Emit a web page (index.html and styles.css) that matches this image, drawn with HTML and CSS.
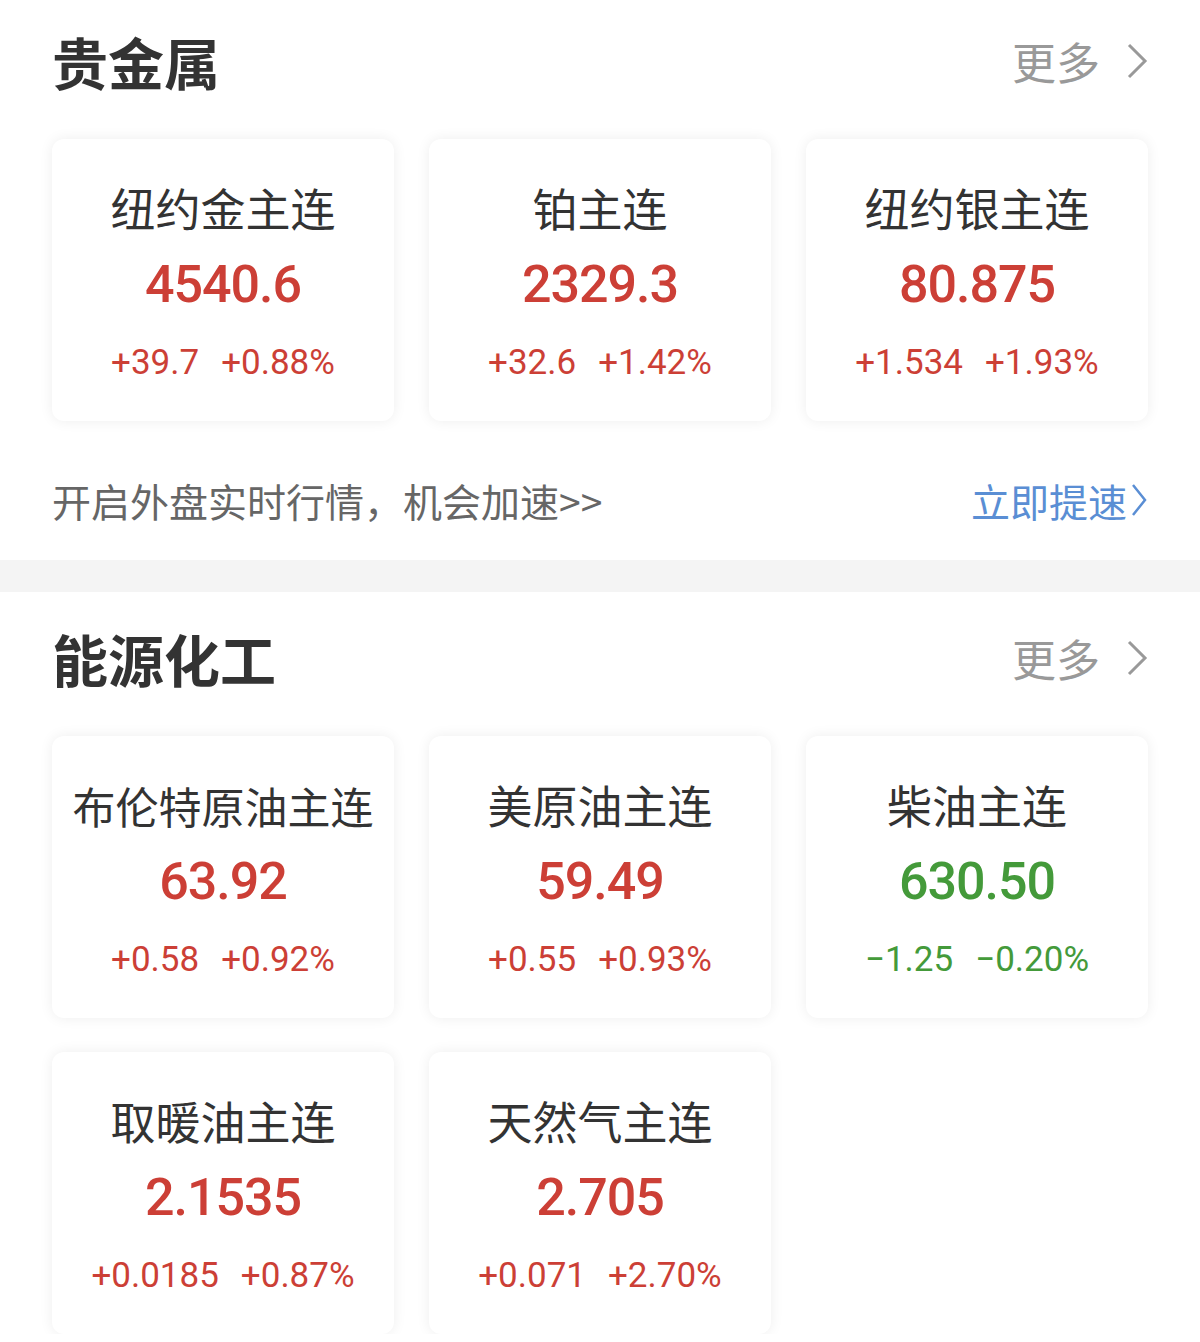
FILE: index.html
```html
<!DOCTYPE html>
<html lang="zh-CN">
<head>
    <meta charset="UTF-8">
    <meta name="viewport" content="width=device-width, initial-scale=1.0">
    <title>行情</title>
    <link rel="stylesheet" href="styles.css">
</head>
<body>
    <div class="page">
        <section class="block">
            <div class="block-header">
                <h2>贵金属</h2>
                <a class="more" href="#">更多
                    <svg class="more-arrow" viewBox="0 0 22 38"><polyline points="3,3 19,19 3,35"/></svg>
                </a>
            </div>
            <div class="quote-grid">
                <div class="quote-card">
                    <div class="quote-name">纽约金主连</div>
                    <div class="quote-price up">4540.6</div>
                    <div class="quote-change up"><span>+39.7</span><span>+0.88%</span></div>
                </div>
                <div class="quote-card">
                    <div class="quote-name">铂主连</div>
                    <div class="quote-price up">2329.3</div>
                    <div class="quote-change up"><span>+32.6</span><span>+1.42%</span></div>
                </div>
                <div class="quote-card">
                    <div class="quote-name">纽约银主连</div>
                    <div class="quote-price up">80.875</div>
                    <div class="quote-change up"><span>+1.534</span><span>+1.93%</span></div>
                </div>
            </div>
            <div class="promo">
                <span class="promo-text">开启外盘实时行情，机会加速&gt;&gt;</span>
                <a class="promo-link" href="#">立即提速
                    <svg class="promo-arrow" viewBox="0 0 18 34"><polyline points="3,2 15,17 3,32"/></svg>
                </a>
            </div>
        </section>

        <div class="divider"></div>

        <section class="block">
            <div class="block-header">
                <h2>能源化工</h2>
                <a class="more" href="#">更多
                    <svg class="more-arrow" viewBox="0 0 22 38"><polyline points="3,3 19,19 3,35"/></svg>
                </a>
            </div>
            <div class="quote-grid">
                <div class="quote-card">
                    <div class="quote-name long">布伦特原油主连</div>
                    <div class="quote-price up">63.92</div>
                    <div class="quote-change up"><span>+0.58</span><span>+0.92%</span></div>
                </div>
                <div class="quote-card">
                    <div class="quote-name">美原油主连</div>
                    <div class="quote-price up">59.49</div>
                    <div class="quote-change up"><span>+0.55</span><span>+0.93%</span></div>
                </div>
                <div class="quote-card">
                    <div class="quote-name">柴油主连</div>
                    <div class="quote-price down">630.50</div>
                    <div class="quote-change down"><span>−1.25</span><span>−0.20%</span></div>
                </div>
                <div class="quote-card">
                    <div class="quote-name">取暖油主连</div>
                    <div class="quote-price up">2.1535</div>
                    <div class="quote-change up"><span>+0.0185</span><span>+0.87%</span></div>
                </div>
                <div class="quote-card">
                    <div class="quote-name">天然气主连</div>
                    <div class="quote-price up">2.705</div>
                    <div class="quote-change up"><span>+0.071</span><span>+2.70%</span></div>
                </div>
            </div>
        </section>
    </div>
</body>
</html>
```

FILE: styles.css
```css
body {
    margin: 0;
    background: #fff;
    font-family: "Noto Sans CJK SC", "Noto Sans", sans-serif;
    color: #333;
}

.page {
    margin-top: -5px;
}

.block {
    padding: 0 52px;
}

.block-header {
    height: 132px;
    display: flex;
    align-items: center;
    justify-content: space-between;
}

.block-header h2 {
    margin: 0;
    font-size: 56px;
    font-weight: 700;
    line-height: 1;
    color: #333;
}

.more {
    display: flex;
    align-items: center;
    gap: 26px;
    font-size: 44px;
    line-height: 1;
    color: #999;
    text-decoration: none;
}

.more-arrow {
    width: 22px;
    height: 38px;
    fill: none;
    stroke: #999;
    stroke-width: 3;
}

.quote-grid {
    margin-top: 12px;
    display: grid;
    grid-template-columns: repeat(3, 342px);
    column-gap: 35px;
    row-gap: 34px;
}

.quote-card {
    height: 282px;
    box-sizing: border-box;
    padding-top: 39px;
    background: #fff;
    border-radius: 12px;
    box-shadow: 0 0 14px rgba(0, 0, 0, 0.07);
    text-align: center;
}

.quote-name {
    font-size: 45px;
    line-height: 60px;
    color: #333;
    white-space: nowrap;
}

.quote-name.long {
    font-size: 43px;
}

.quote-price {
    margin-top: 17px;
    font-family: "Roboto", "Noto Sans", sans-serif;
    font-size: 52px;
    font-weight: 500;
    letter-spacing: -1px;
    line-height: 60px;
}

.quote-change {
    margin-top: 23px;
    display: flex;
    justify-content: center;
    gap: 22px;
    font-family: "Roboto", "Noto Sans", sans-serif;
    font-size: 35px;
    line-height: 50px;
}

.up {
    color: #cc3f36;
}

.down {
    color: #449a3a;
}

.promo {
    padding: 55px 0 36px;
    display: flex;
    align-items: center;
    justify-content: space-between;
    line-height: 48px;
    font-size: 39px;
}

.promo-text {
    color: #666;
}

.promo-link {
    display: flex;
    align-items: center;
    gap: 3px;
    color: #5a8ed4;
    text-decoration: none;
}

.promo-arrow {
    width: 18px;
    height: 34px;
    fill: none;
    stroke: #5a8ed4;
    stroke-width: 2.5;
}

.divider {
    height: 32px;
    background: #f4f4f4;
}
```
